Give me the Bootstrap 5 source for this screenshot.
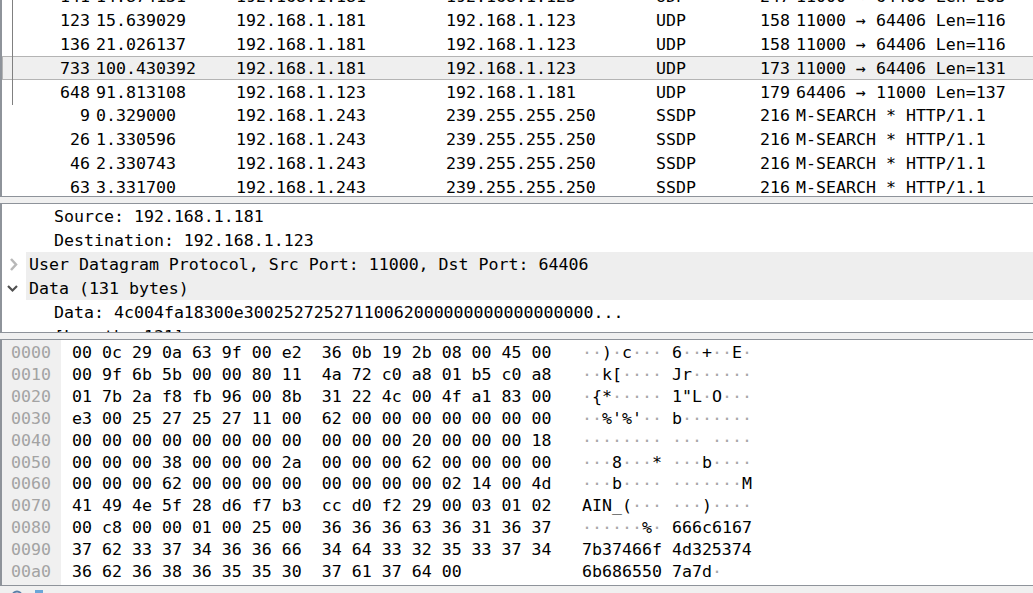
<!DOCTYPE html>
<html lang="en">

<head>
    <meta charset="UTF-8" />
    <meta name="viewport" content="width=device-width, initial-scale=1.0" />
    <title>Packet capture</title>
    <link href="https://cdn.jsdelivr.net/npm/bootstrap@5.3.0/dist/css/bootstrap.min.css" rel="stylesheet">
    <style>
        html,
        body {
            height: 100%;
            margin: 0;
            overflow: hidden;
            background-color: #f0f0f0;
        }

        .capture-window {
            width: 1033px;
            height: 593px;
            overflow: hidden;
            font-family: "DejaVu Sans Mono", "Liberation Mono", monospace;
            font-size: 16.6px;
            color: #000;
        }

        .pkt-row>div,
        .tree-row,
        .tree-label,
        .hex-offsets>div,
        .hex-bytes>div,
        .hex-ascii>div {
            white-space: pre;
        }

        .pane {
            background-color: #fff;
            border: 1px solid #8e939a;
            overflow: hidden;
        }

        .pane-list {
            height: 197px;
            border-width: 0 0 1px 2px;
            position: relative;
        }

        .list-scroll {
            margin-top: -16px;
        }

        .pkt-row {
            display: grid;
            grid-template-columns: 88px 146px 210px 210px 100px 34px 1fr;
            height: 23.9px;
            line-height: 25.9px;
        }

        .pkt-row.current {
            background-color: #efefef;
            box-shadow: inset 1px 1px 0 #b4b4b4, inset 0 -1px 0 #b4b4b4;
        }

        .pkt-no,
        .pkt-len {
            text-align: right;
        }

        .pkt-time,
        .pkt-info {
            padding-left: 6px;
        }

        .related-line {
            position: absolute;
            left: 10px;
            top: 0;
            width: 1px;
            height: 105px;
            background-color: #808080;
        }

        .pane-tree {
            margin-top: 6px;
            height: 130px;
            border-width: 1px 0 1px 2px;
        }

        .tree-row {
            height: 24px;
            line-height: 26px;
            padding-left: 52px;
        }

        .tree-row.parent {
            padding-left: 24px;
            display: flex;
            align-items: center;
        }

        .tree-row.parent .tree-label {
            flex: 1;
            background-color: #eee;
            padding-left: 3px;
            height: 24px;
        }

        .tree-arrow {
            width: 24px;
            margin-left: -24px;
            height: 24px;
            flex: none;
            display: block;
        }

        .pane-hex {
            margin-top: 6px;
            height: 247px;
            border-width: 1px 0 1px 2px;
            display: flex;
        }

        .hex-offsets {
            width: 59px;
            flex: none;
            background-color: #f0f0f0;
            color: #a3a3a3;
            padding-left: 9px;
        }

        .hex-bytes {
            padding-left: 11px;
            width: 521px;
            flex: none;
        }

        .hex-offsets,
        .hex-bytes,
        .hex-ascii {
            padding-top: 2px;
            line-height: 21.9px;
        }

        .dot {
            color: #a8a8a8;
        }

        .status-icons {
            height: 7px;
            padding: 4px 0 0 10px;
            overflow: hidden;
        }
    </style>
</head>

<body>
    <div class="capture-window">
        <div class="pane pane-list">
            <div class="list-scroll" id="packets"></div>
            <div class="related-line"></div>
        </div>

        <div class="pane pane-tree">
            <div class="tree-row">Source: 192.168.1.181</div>
            <div class="tree-row">Destination: 192.168.1.123</div>
            <div class="tree-row parent">
                <svg class="tree-arrow" viewBox="0 0 24 24"><path d="M9 7l5 5.5-5 5.5" fill="none" stroke="#b8b8b8" stroke-width="2.5" /></svg>
                <span class="tree-label">User Datagram Protocol, Src Port: 11000, Dst Port: 64406</span>
            </div>
            <div class="tree-row parent">
                <svg class="tree-arrow" viewBox="0 0 24 24"><path d="M6 10l4.5 4.5 4.5-4.5" fill="none" stroke="#505050" stroke-width="2.2" /></svg>
                <span class="tree-label">Data (131 bytes)</span>
            </div>
            <div class="tree-row">Data: 4c004fa18300e30025272527110062000000000000000000...</div>
            <div class="tree-row">[Length: 131]</div>
        </div>

        <div class="pane pane-hex">
            <div class="hex-offsets" id="offsets"></div>
            <div class="hex-bytes" id="bytes"></div>
            <div class="hex-ascii" id="ascii"></div>
        </div>

        <div class="status-icons d-flex align-items-start">
            <svg width="36" height="7" viewBox="0 0 36 7">
                <circle cx="7" cy="6" r="4.5" fill="none" stroke="#5a7fa8" stroke-width="2" />
                <rect x="25" y="0" width="8" height="7" fill="#6aa6d8" />
            </svg>
        </div>
    </div>

    <script>
        // rows of the packet list: no, time, source, destination, proto, length, info
        const packets = [
            ['141', '14.874131', '192.168.1.181', '192.168.1.123', 'UDP', '247', '11000 → 64406 Len=205'],
            ['123', '15.639029', '192.168.1.181', '192.168.1.123', 'UDP', '158', '11000 → 64406 Len=116'],
            ['136', '21.026137', '192.168.1.181', '192.168.1.123', 'UDP', '158', '11000 → 64406 Len=116'],
            ['733', '100.430392', '192.168.1.181', '192.168.1.123', 'UDP', '173', '11000 → 64406 Len=131'],
            ['648', '91.813108', '192.168.1.123', '192.168.1.181', 'UDP', '179', '64406 → 11000 Len=137'],
            ['9', '0.329000', '192.168.1.243', '239.255.255.250', 'SSDP', '216', 'M-SEARCH * HTTP/1.1'],
            ['26', '1.330596', '192.168.1.243', '239.255.255.250', 'SSDP', '216', 'M-SEARCH * HTTP/1.1'],
            ['46', '2.330743', '192.168.1.243', '239.255.255.250', 'SSDP', '216', 'M-SEARCH * HTTP/1.1'],
            ['63', '3.331700', '192.168.1.243', '239.255.255.250', 'SSDP', '216', 'M-SEARCH * HTTP/1.1']
        ];
        const cellClass = ['pkt-no', 'pkt-time', '', '', '', 'pkt-len', 'pkt-info'];
        document.getElementById('packets').innerHTML = packets.map(function (p, i) {
            const cells = p.map((v, c) => `<div class="${cellClass[c]}">${v}</div>`).join('');
            return `<div class="pkt-row${i === 3 ? ' current' : ''}">${cells}</div>`;
        }).join('');

        const hex = [
            '00 0c 29 0a 63 9f 00 e2  36 0b 19 2b 08 00 45 00',
            '00 9f 6b 5b 00 00 80 11  4a 72 c0 a8 01 b5 c0 a8',
            '01 7b 2a f8 fb 96 00 8b  31 22 4c 00 4f a1 83 00',
            'e3 00 25 27 25 27 11 00  62 00 00 00 00 00 00 00',
            '00 00 00 00 00 00 00 00  00 00 00 20 00 00 00 18',
            '00 00 00 38 00 00 00 2a  00 00 00 62 00 00 00 00',
            '00 00 00 62 00 00 00 00  00 00 00 00 02 14 00 4d',
            '41 49 4e 5f 28 d6 f7 b3  cc d0 f2 29 00 03 01 02',
            '00 c8 00 00 01 00 25 00  36 36 36 63 36 31 36 37',
            '37 62 33 37 34 36 36 66  34 64 33 32 35 33 37 34',
            '36 62 36 38 36 35 35 30  37 61 37 64 00'
        ];
        document.getElementById('offsets').innerHTML = hex.map((h, i) => `<div>${(i * 16).toString(16).padStart(4, '0')}</div>`).join('');
        document.getElementById('bytes').innerHTML = hex.map(h => `<div>${h}</div>`).join('');

        // non printable bytes get a grey dot in the ascii column
        document.getElementById('ascii').innerHTML = hex.map(function (h) {
            const vals = h.replace('  ', ' ').split(' ').map(b => parseInt(b, 16));
            let out = '';
            vals.forEach(function (v, i) {
                if (i === 8) out += ' ';
                if (v >= 32 && v < 127) {
                    out += String.fromCharCode(v);
                } else {
                    out += '<span class="dot">·</span>';
                }
            });
            return `<div>${out}</div>`;
        }).join('');
    </script>
    <script src="https://cdn.jsdelivr.net/npm/bootstrap@5.3.0/dist/js/bootstrap.bundle.min.js"></script>
</body>

</html>
